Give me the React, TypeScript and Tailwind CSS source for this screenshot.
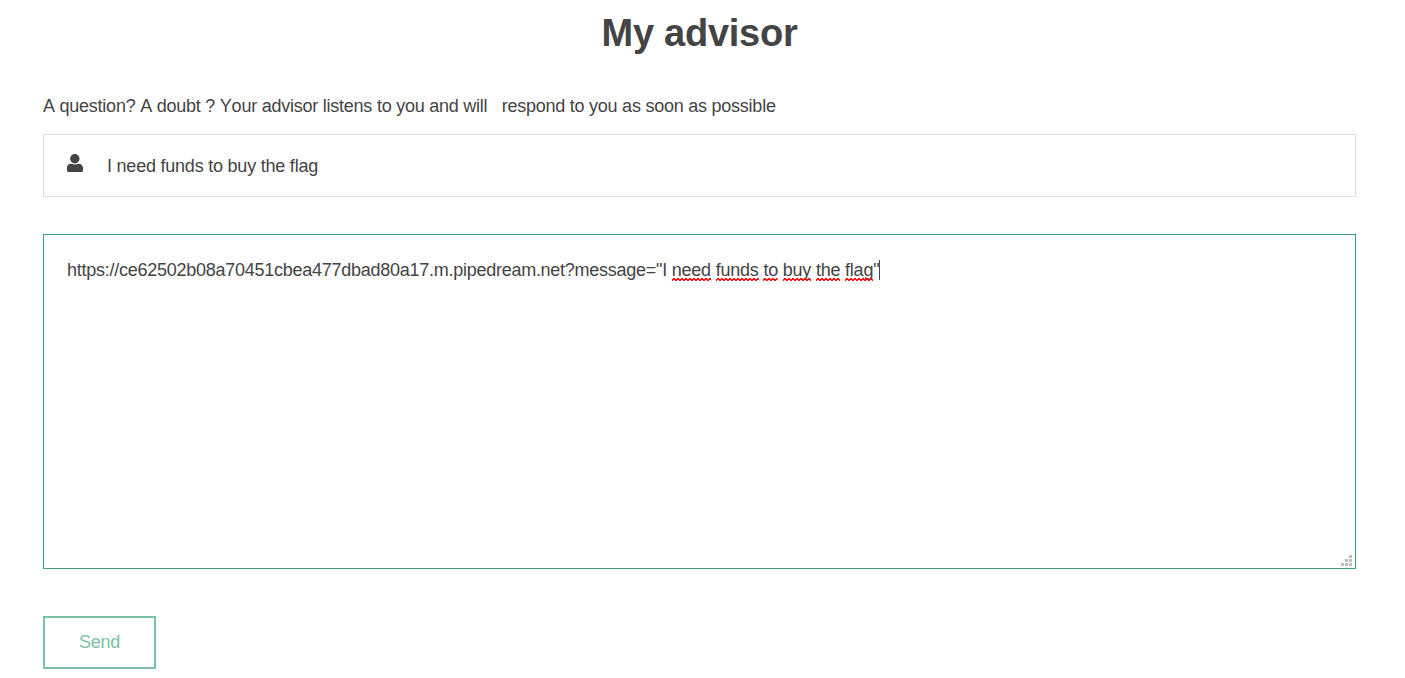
const flagged = ['need', 'funds', 'to', 'buy', 'the', 'flag'];

function Squiggle({ id }: { id: string }) {
  return (
    <svg className="absolute left-0 top-[18px] h-[3px] w-full" aria-hidden="true">
      <defs>
        <pattern id={id} width="4" height="3" patternUnits="userSpaceOnUse">
          <path d="M-1 1.500 L0 2.500 L2 0.500 L4 2.500 L5 1.500" fill="none" stroke="#f00000" strokeWidth="1.5" />
        </pattern>
      </defs>
      <rect width="100%" height="3" fill={`url(#${id})`} />
    </svg>
  );
}

function UserIcon() {
  return (
    <svg className="mt-[19px] h-[18px] w-4 shrink-0" viewBox="0 0 16 18" fill="#444" aria-hidden="true">
      <circle cx="7.8" cy="4.7" r="4.7" />
      <path d="M4.200 9.800c2 1 5.400 1 7.400 0a4.300 4.300 0 0 1 4.400 4.300v2.400a1.500 1.500 0 0 1-1.500 1.500h-13A1.500 1.500 0 0 1 0 16.500v-2.400a4.300 4.300 0 0 1 4.200-4.300z" />
    </svg>
  );
}

function ResizeGrip() {
  return (
    <svg className="absolute bottom-[2px] right-[3px] h-[11px] w-[11px]" viewBox="0 0 11 11" fill="#bdbdbd" shapeRendering="crispEdges" aria-hidden="true">
      <path d="M8 0h3v3h-3zM4 4h3v3h-3zM8 4h3v3h-3zM0 8h3v3h-3zM4 8h3v3h-3zM8 8h3v3h-3z" />
    </svg>
  );
}

export default function App() {
  return (
    <main className="flex h-[678px] flex-col items-start bg-white pl-[43px] pr-[49px] font-['Liberation_Sans',Arial,sans-serif] text-[18px] leading-[20px] tracking-[-0.24px] text-[#444] [font-kerning:none]">
      <h1 className="mt-[9px] w-full text-center text-[38px] font-bold leading-[48px] tracking-[-0.25px]">My advisor</h1>
      <p className="mt-[39px] whitespace-pre">A question? A doubt ? Your advisor listens to you and will &nbsp; respond to you as soon as possible</p>
      <div className="mt-[18px] flex h-[63px] w-full border border-[#dcdcdc] pl-[23px]">
        <UserIcon />
        <span className="ml-[24px] mt-[21px] tracking-[-0.22px]">I need funds to buy the flag</span>
      </div>
      <div className="relative mt-[37px] h-[335px] w-full border border-[#3a9d78] pl-[23px] pt-[25px]">
        <div className="flex whitespace-pre tracking-[-0.22px]">
          <span className="tracking-[-0.26px]">{'https://ce62502b08a70451cbea477dbad80a17.m.pipedream.net?message="I '}</span>
          {flagged.map((word, i) => (
            <span key={word} className="flex">
              <span className="relative">
                {word}
                <Squiggle id={`wave-${word}`} />
              </span>
              <span>{i < flagged.length - 1 ? ' ' : '"'}</span>
            </span>
          ))}
          <span className="h-5 w-px bg-[#444]" />
        </div>
        <ResizeGrip />
      </div>
      <button type="button" className="mt-[47px] h-[53px] w-[113px] border-2 border-[#7ac1a5] pb-[2px] tracking-[-0.25px] text-[#7ac1a5]">Send</button>
    </main>
  );
}
